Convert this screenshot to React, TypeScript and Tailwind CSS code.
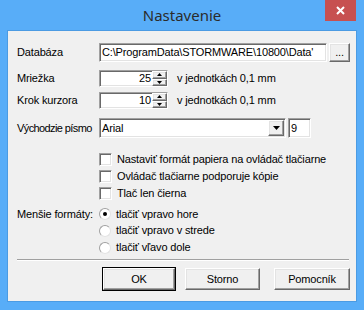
import React from 'react';

const sunken =
  'border border-t-[#a0a0a0] border-l-[#a0a0a0] border-b-white border-r-white shadow-[inset_1px_1px_0_#696969,inset_-1px_-1px_0_#e3e3e3]';
const raised =
  'border border-t-white border-l-white border-b-[#696969] border-r-[#696969] shadow-[inset_-1px_-1px_0_#a0a0a0,inset_1px_1px_0_#e3e3e3]';

const Arrow: React.FC<{ up?: boolean; size?: number }> = ({ up, size = 3 }) => (
  <svg width={size * 2 + 1} height={size + 1} viewBox={`0 0 ${size * 2 + 1} ${size + 1}`}>
    <polygon
      points={up ? `0,${size + 1} ${size * 2 + 1},${size + 1} ${size + 0.5},0` : `0,0 ${size * 2 + 1},0 ${size + 0.5},${size + 1}`}
      fill="#000"
    />
  </svg>
);

const Spinner: React.FC<{ value: string }> = ({ value }) => (
  <div className={`w-[69px] h-[17px] bg-white flex ${sunken}`}>
    <div className="flex-1 text-right leading-[15px] pr-px">{value}</div>
    <div className="w-[15px] flex flex-col">
      <div className={`flex-1 bg-[#f0f0f0] flex items-center justify-center ${raised}`}>
        <Arrow up size={2} />
      </div>
      <div className={`flex-1 bg-[#f0f0f0] flex items-center justify-center ${raised}`}>
        <Arrow size={2} />
      </div>
    </div>
  </div>
);

const Checkbox: React.FC<{ label: string }> = ({ label }) => (
  <div className="h-[17px] flex items-center pl-[91px]">
    <div className={`w-[13px] h-[13px] bg-white ${sunken}`} />
    <span className="ml-[5px]">{label}</span>
  </div>
);

const Radio: React.FC<{ checked?: boolean }> = ({ checked }) => (
  <div className="w-[12px] h-[12px] rounded-full bg-white border border-t-[#a0a0a0] border-l-[#a0a0a0] border-b-[#e3e3e3] border-r-[#e3e3e3] flex items-center justify-center">
    {checked && <div className="w-[4px] h-[4px] rounded-full bg-black" />}
  </div>
);

const Button: React.FC<{ label: string; w: string; def?: boolean }> = ({ label, w, def }) => (
  <div
    className={`${w} h-[22px] bg-[#f0f0f0] flex items-center justify-center ${raised} ${def ? 'outline outline-1 outline-black' : ''}`}
  >
    {label}
  </div>
);

export default function App() {
  return (
    <div className="w-[364px] h-[310px] bg-[#58adf8] flex flex-col overflow-hidden">
      <div className="h-[31px] relative flex items-center justify-center">
        <span className="text-[15px] text-[#2b2b2b] font-['Noto_Sans',sans-serif] -mt-[1px]">Nastavenie</span>
        <div className="absolute top-0 right-[8px] w-[31px] h-[21px] bg-[#c75050] flex items-center justify-center">
          <svg width="9" height="9" viewBox="0 0 9 9">
            <path d="M1 1L8 8M8 1L1 8" stroke="#fff" strokeWidth="2" />
          </svg>
        </div>
      </div>
      <div className="mx-[8px] w-[348px] h-[270px] bg-[#f0f0f0] shadow-[0_0_0_1px_#4b9be3] flex flex-col text-[11px] tracking-[-0.15px] text-black font-['Liberation_Sans',Arial,sans-serif]">
        <div className="mt-[12px] h-[19px] flex items-center pl-[9px]">
          <span className="w-[82px]">Databáza</span>
          <div className={`w-[228px] h-[19px] bg-white overflow-hidden whitespace-nowrap leading-[17px] pl-[2px] ${sunken}`}>
            C:\ProgramData\STORMWARE\10800\Data'
          </div>
          <div className={`ml-[2px] w-[21px] h-[19px] bg-[#f0f0f0] flex items-center justify-center ${raised}`}>...</div>
        </div>
        <div className="mt-[8px] h-[17px] flex items-center pl-[9px]">
          <span className="w-[82px]">Mriežka</span>
          <Spinner value="25" />
          <span className="ml-[9px]">v jednotkách 0,1 mm</span>
        </div>
        <div className="mt-[5px] h-[17px] flex items-center pl-[9px]">
          <span className="w-[82px]">Krok kurzora</span>
          <Spinner value="10" />
          <span className="ml-[9px]">v jednotkách 0,1 mm</span>
        </div>
        <div className="mt-[9px] h-[20px] flex items-center pl-[9px]">
          <span className="w-[82px] whitespace-nowrap tracking-[-0.6px]">Východzie písmo</span>
          <div className={`w-[187px] h-[20px] bg-white flex items-center ${sunken}`}>
            <span className="flex-1 pl-[2px]">Arial</span>
            <div className={`w-[16px] h-[16px] mr-px bg-[#f0f0f0] flex items-center justify-center ${raised}`}>
              <Arrow size={3} />
            </div>
          </div>
          <div className={`ml-[2px] w-[23px] h-[20px] bg-white leading-[18px] pl-[2px] ${sunken}`}>9</div>
        </div>
        <div className="mt-[13px] flex flex-col">
          <Checkbox label="Nastaviť formát papiera na ovládač tlačiarne" />
          <Checkbox label="Ovládač tlačiarne podporuje kópie" />
          <Checkbox label="Tlač len čierna" />
        </div>
        <div className="mt-[4px] flex pl-[9px]">
          <span className="w-[82px] h-[16px] leading-[16px]">Menšie formáty:</span>
          <div className="flex flex-col">
            <div className="h-[16px] flex items-center">
              <Radio checked />
              <span className="ml-[5px]">tlačiť vpravo hore</span>
            </div>
            <div className="h-[17px] flex items-center">
              <Radio />
              <span className="ml-[5px]">tlačiť vpravo v strede</span>
            </div>
            <div className="h-[17px] flex items-center">
              <Radio />
              <span className="ml-[5px]">tlačiť vľavo dole</span>
            </div>
          </div>
        </div>
        <div className="mt-[3px] ml-[9px] mr-[7px] border-t border-t-[#a0a0a0] border-b border-b-white" />
        <div className="mt-[7px] flex pl-[95px]">
          <Button label="OK" w="w-[72px]" def />
          <Button label="Storno" w="w-[75px] ml-[10px]" />
          <Button label="Pomocník" w="w-[76px] ml-[14px]" />
        </div>
      </div>
    </div>
  );
}
